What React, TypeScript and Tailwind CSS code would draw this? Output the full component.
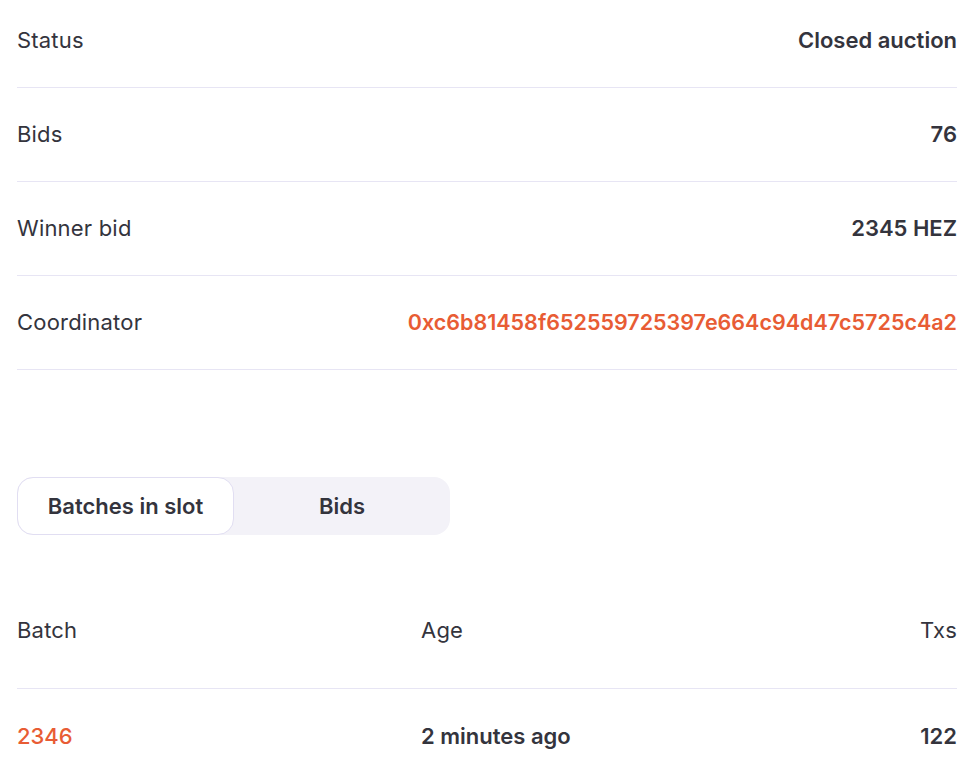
const ROWS = [
  { label: "Status", value: "Closed auction" },
  { label: "Bids", value: "76" },
  { label: "Winner bid", value: "2345 HEZ" },
  { label: "Coordinator", value: "0xc6b81458f652559725397e664c94d47c5725c4a2", link: true },
];

export default function App() {
  return (
    <div
      className="min-h-screen bg-white pl-[17px] pr-[23px] text-[22px] text-[#34343d]"
      style={{ fontFamily: "Inter, 'Noto Sans', sans-serif" }}
    >
      {/* Slot details */}
      <div>
        {ROWS.map((row, i) => (
          <div
            key={row.label}
            className={`flex items-center justify-between border-b-[1.5px] border-[#e7e5f4] ${
              i === 0 ? "h-[88px] pb-[6px]" : "h-[94px]"
            }`}
          >
            <span className="tracking-[0.2px]">{row.label}</span>
            <span
              className={
                row.link
                  ? "text-[21.5px] font-semibold text-[#e85c34]"
                  : "font-semibold"
              }
            >
              {row.value}
            </span>
          </div>
        ))}
      </div>

      {/* Tabs */}
      <div className="mt-[107px] flex h-[58px] w-[433px] rounded-[16px] bg-[#f3f2f8]">
        <button className="h-full w-[217px] rounded-[16px] border border-[#e1def2] bg-white font-semibold">
          Batches in slot
        </button>
        <button className="h-full flex-1 font-semibold">Bids</button>
      </div>

      {/* Batches table */}
      <div className="mt-[79px]">
        <div className="grid h-[75px] grid-cols-[404px_1fr_auto] items-start border-b-[1.5px] border-[#e7e5f4] tracking-[0.2px]">
          <span>Batch</span>
          <span>Age</span>
          <span>Txs</span>
        </div>
        <div className="grid h-[94px] grid-cols-[404px_1fr_auto] items-center">
          <span className="font-medium text-[#e85c34]">2346</span>
          <span className="font-semibold">2 minutes ago</span>
          <span className="font-semibold">122</span>
        </div>
      </div>
    </div>
  );
}
